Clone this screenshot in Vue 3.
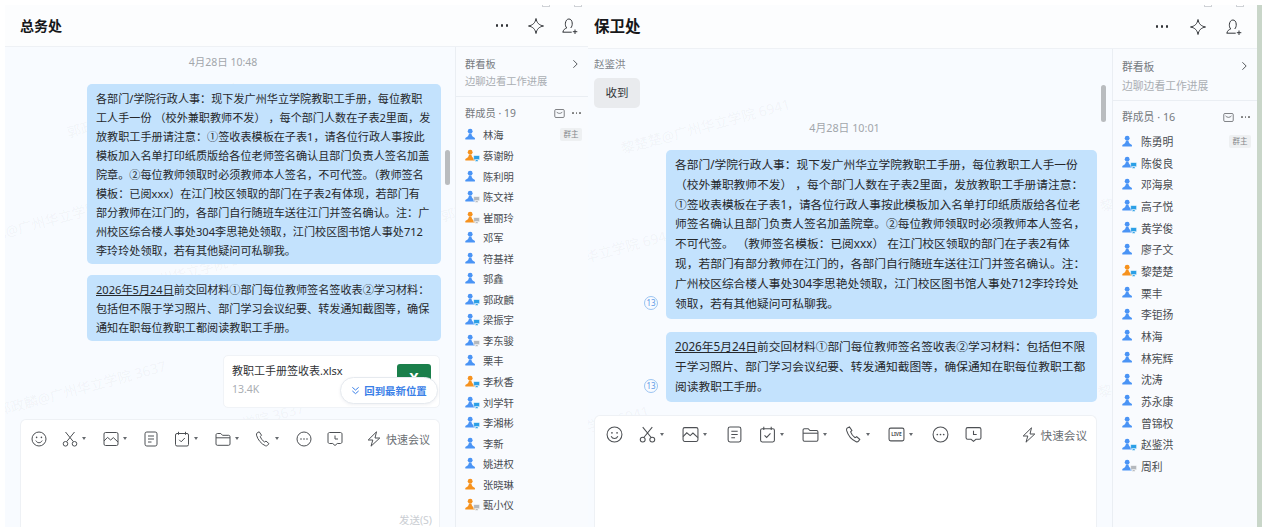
<script setup>
const mk = (s) => s.split(' ').map((t) => {
  const [n, c, d] = t.split(':')
  return { n, c: c === 'o' ? '#f6921e' : '#4a94f5', d: d || '' }
})

const panels = [
  {
    cls: 'p1', title: '总务处', count: 19, date: '4月28日 10:48', sender: null, file: true, send: true,
    marks: [[-8, 400], [62, 122], [-40, 232], [88, 287], [130, 442], [436, 206]].map(([x, y]) => ({ x, y: y - 47 })),
    winMarks: [542, 574],
    bubbles: [
      { read: false, lines: ['各部门/学院行政人事：现下发广州华立学院教职工手册，每位教职', '工人手一份 （校外兼职教师不发） ，每个部门人数在子表2里面，发', '放教职工手册请注意：①签收表模板在子表1，请各位行政人事按此', '模板加入名单打印纸质版给各位老师签名确认且部门负责人签名加盖', '院章。②每位教师领取时必须教师本人签名，不可代签。（教师签名', '模板：已阅xxx）在江门校区领取的部门在子表2有体现，若部门有', '部分教师在江门的，各部门自行随班车送往江门并签名确认。注：广', '州校区综合楼人事处304李思艳处领取，江门校区图书馆人事处712', '李玲玲处领取，若有其他疑问可私聊我。'] },
      { read: false, u: '2026年5月24日', lines: ['前交回材料①部门每位教师签名签收表②学习材料：', '包括但不限于学习照片、部门学习会议纪要、转发通知截图等，确保', '通知在职每位教职工都阅读教职工手册。'] },
    ],
    members: mk('林海 蔡谢盼:o:pc 陈利明 陈文祥:b:g 崔丽玲:o:g 邓军 符基祥 郭鑫 郭政麟:b:pc 梁振宇:b:pc 李东骏:b:g 栗丰 李秋香:o:pc 刘学轩:b:pc 李湘彬:b:pc 李新 姚进权 张晓琳:o 甄小仪:o:g'),
    tools: [['smile', 0], ['cut', 1], ['image', 1], ['doc', 0], ['todo', 1], ['folder', 1], ['phone', 1], ['more', 0], ['clock', 0]],
  },
  {
    cls: 'p2', title: '保卫处', count: 16, date: '4月28日 10:01', sender: { name: '赵鉴洪', text: '收到' }, file: false, send: false,
    marks: [[621, 138], [505, 268], [440, 52], [1100, 196], [480, 445], [1098, 382]].map(([x, y]) => ({ x: x - 588, y: y - 49 })),
    winMarks: [542 + 662, 574 + 662],
    bubbles: [
      { read: true, lines: ['各部门/学院行政人事：现下发广州华立学院教职工手册，每位教职工人手一份', '（校外兼职教师不发） ，每个部门人数在子表2里面，发放教职工手册请注意：', '①签收表模板在子表1，请各位行政人事按此模板加入名单打印纸质版给各位老', '师签名确认且部门负责人签名加盖院章。②每位教师领取时必须教师本人签名，', '不可代签。 （教师签名模板：已阅xxx） 在江门校区领取的部门在子表2有体', '现，若部门有部分教师在江门的，各部门自行随班车送往江门并签名确认。注：', '广州校区综合楼人事处304李思艳处领取，江门校区图书馆人事处712李玲玲处', '领取，若有其他疑问可私聊我。'] },
      { read: true, u: '2026年5月24日', lines: ['前交回材料①部门每位教师签名签收表②学习材料：包括但不限', '于学习照片、部门学习会议纪要、转发通知截图等，确保通知在职每位教职工都', '阅读教职工手册。'] },
    ],
    members: mk('陈勇明 陈俊良:b:pc 邓海泉 高子悦:b:pc 黄学俊:b:pc 廖子文 黎楚楚:o:pc 栗丰 李钜扬 林海 林宪辉 沈涛 苏永康 曾锦权 赵鉴洪:b:pc 周利:b:g'),
    tools: [['smile', 0], ['cut', 1], ['image', 1], ['doc', 0], ['todo', 1], ['folder', 1], ['phone', 1], ['live', 1], ['more', 0], ['clock', 0]],
  },
]

const markText = (p) => (p.cls === 'p1' ? '郭政麟@广州华立学院 3637' : '黎楚楚@广州华立学院 6941')
</script>

<template>
  <div class="page">
    <svg class="defs" width="0" height="0" aria-hidden="true">
      <symbol id="i-smile" viewBox="0 0 16 16"><circle cx="8" cy="8" r="7" /><circle class="fill" cx="5.6" cy="6.4" r=".8" /><circle class="fill" cx="10.4" cy="6.4" r=".8" /><path d="M4.8 9.6c.8 1.5 1.9 2.1 3.2 2.1s2.4-.6 3.2-2.1" /></symbol>
      <symbol id="i-cut" viewBox="0 0 16 16"><path d="M3.5 1l7.8 9.6M12.5 1L4.700 10.600" /><circle cx="3.500" cy="12.800" r="2.300" /><circle cx="12.500" cy="12.800" r="2.300" /></symbol>
      <symbol id="i-image" viewBox="0 0 16 16"><rect x="1" y="1.500" width="14" height="13" rx="1.500" /><path d="M1 10l3.500-3.600 3.200 2.600 2.600-2.400L15 11" /></symbol>
      <symbol id="i-doc" viewBox="0 0 16 16"><rect x="2" y="1" width="12" height="14" rx="1.800" /><path d="M5 5h6M5 8h6M5 11h3.500" /></symbol>
      <symbol id="i-todo" viewBox="0 0 16 16"><rect x="1.500" y="2.500" width="13" height="12.500" rx="1.500" /><path d="M4.500 .8v3M11.500 .8v3M5.200 8.800l2 2 3.600-3.800" /></symbol>
      <symbol id="i-folder" viewBox="0 0 16 16"><path d="M1 4c0-.8.500-1.500 1.300-1.500h3.500l1.700 1.800h6.200c.8 0 1.300.6 1.300 1.300v7.400c0 .8-.5 1.300-1.300 1.300H2.300C1.500 14.300 1 13.800 1 13z" /><path d="M1 6.800h14" /></symbol>
      <symbol id="i-phone" viewBox="0 0 16 16"><path d="M2.200 1.800l2-1 2.300 3.400-1.200 1.400c.6 1.800 2.300 4.200 4.200 5.400l1.500-.9 2.900 2.500-1.200 1.600c-.5.6-1.400.9-2.200.6C6.200 13 2.800 8.700 1.500 4.200c-.2-.9.100-1.900.7-2.400z" /></symbol>
      <symbol id="i-more" viewBox="0 0 16 16"><circle cx="8" cy="8" r="7" /><circle class="fill" cx="5" cy="8" r=".8" /><circle class="fill" cx="8" cy="8" r=".8" /><circle class="fill" cx="11" cy="8" r=".8" /></symbol>
      <symbol id="i-clock" viewBox="0 0 16 16"><path d="M2.500 1.500h11c.8 0 1.500.7 1.500 1.500v8c0 .8-.7 1.500-1.500 1.500h-3.200L8 14.500l-2.300-2H2.500C1.700 12.500 1 11.800 1 11V3c0-.8.700-1.500 1.500-1.500z" /><path d="M8 4.500v3.500h3" /></symbol>
      <symbol id="i-live" viewBox="0 0 16 16"><rect x="1" y="2" width="14" height="12" rx="1.500" /><text class="live" x="8" y="9.700" text-anchor="middle">LIVE</text></symbol>
      <symbol id="i-bolt" viewBox="0 0 16 16"><path d="M10.500 .8L2.200 9h4.600l-1.800 6.200L13.800 7H9l1.500-6.200z" /></symbol>
      <symbol id="i-star" viewBox="0 0 18 18"><path d="M9 1.500c.8 4.300 2.900 6.600 7.500 7.500-4.600.9-6.700 3.200-7.500 7.500-.8-4.300-2.900-6.600-7.500-7.500 4.600-.9 6.700-3.200 7.500-7.500z" /></symbol>
      <symbol id="i-add" viewBox="0 0 18 18"><path d="M1.500 15.200h9.200M2 15c.4-2.500 1.900-3.200 3.700-4-1.100-1.300-1.500-3-1.300-4.800.3-2.500 1.600-4.200 3.500-4.200s3.100 1.600 3.300 4c.2 1.900-.3 3.700-1.500 5" /><path d="M14 12.500v4.500M11.800 14.700h4.500" /></symbol>
      <symbol id="i-mail" viewBox="0 0 14 12"><rect x=".7" y=".7" width="12.600" height="10.600" rx="1.500" /><path d="M3 3.800c1 1.300 2.400 2 4 2s3-.7 4-2" /></symbol>
    </svg>

    <section v-for="p in panels" :key="p.cls" class="panel" :class="p.cls">
      <header class="head">
        <h1>{{ p.title }}</h1>
        <div class="head-icons">
          <span class="dots"><i /><i /><i /></span>
          <svg class="ico big"><use href="#i-star" /></svg>
          <svg class="ico big"><use href="#i-add" /></svg>
        </div>
      </header>
      <div class="body">
        <div class="chat">
          <div class="marks">
            <span v-for="(m, i) in p.marks" :key="i" class="mark" :style="{ left: m.x + 'px', top: m.y + 'px' }">{{ markText(p) }}</span>
          </div>
          <div class="msgs">
            <div v-if="p.sender" class="incoming">
              <div class="sender">{{ p.sender.name }}</div>
              <div class="gray">{{ p.sender.text }}</div>
            </div>
            <div class="date">{{ p.date }}</div>
            <div v-for="(b, i) in p.bubbles" :key="i" class="bubble">
              <div v-for="(l, j) in b.lines" :key="j" class="line"><u v-if="b.u && j === 0">{{ b.u }}</u>{{ l }}</div>
              <span v-if="b.read" class="read">13</span>
            </div>
            <div v-if="p.file" class="file">
              <div class="file-info">
                <div class="file-name">教职工手册签收表.xlsx</div>
                <div class="file-size">13.4K</div>
              </div>
              <div class="xls">X</div>
              <div class="pill">
                <svg class="chev" viewBox="0 0 10 10"><path d="M1.500 1.500L5 4.500l3.500-3M1.500 5.500L5 8.500l3.500-3" /></svg>
                回到最新位置
              </div>
            </div>
          </div>
          <span class="scroll" />
          <div class="editor">
            <div class="tools">
              <div v-for="t in p.tools" :key="t[0]" class="tool" :class="{ withcaret: t[1] }">
                <svg class="ico"><use :href="'#i-' + t[0]" /></svg>
                <span v-if="t[1]" class="caret" />
              </div>
              <div class="quick">
                <svg class="ico"><use href="#i-bolt" /></svg>
                <span>快速会议</span>
              </div>
            </div>
            <div v-if="p.send" class="send">发送(S)</div>
          </div>
        </div>
        <aside class="side">
          <div class="board">
            <div class="board-title">群看板
              <svg class="chevron" viewBox="0 0 8 12"><path d="M1.500 1.500L6 6l-4.500 4.500" /></svg>
            </div>
            <div class="board-sub">边聊边看工作进展</div>
          </div>
          <div class="mem-head">
            <span>群成员 · {{ p.count }}</span>
            <div class="mem-tools">
              <svg class="mail"><use href="#i-mail" /></svg>
              <span class="dots small"><i /><i /><i /></span>
            </div>
          </div>
          <div v-for="(m, i) in p.members" :key="m.n" class="row">
            <svg class="person" viewBox="0 0 16 14">
              <circle cx="5.500" cy="3.400" r="2.600" :fill="m.c" />
              <path d="M4.200 6h2.600c.3 2.600 1.500 3.600 3.500 4.500.5.300.6 2 .1 2H.5c-.5 0-.4-1.700.1-2C2.700 9.600 3.900 8.600 4.200 6z" :fill="m.c" />
              <g v-if="m.d" :fill="m.d === 'pc' ? '#2b9fe6' : '#b4b8bd'" stroke="#fff" stroke-width=".6">
                <rect x="9.200" y="7" width="6.500" height="4.600" rx=".6" />
                <rect x="11" y="11.400" width="3" height="2" rx=".3" />
              </g>
            </svg>
            <span class="name">{{ m.n }}</span>
            <span v-if="i === 0" class="owner">群主</span>
          </div>
        </aside>
      </div>
      <span v-for="x in p.winMarks" :key="x" class="win" :style="{ left: x - (p.cls === 'p1' ? 5 : 588) + 'px' }" />
    </section>
    <div class="edge" />
  </div>
</template>

<style>
html, body { margin: 0; background: #fff; }
</style>

<style scoped>
.page {
  --ink: #2b2d30;
  display: flex;
  width: 1268px;
  height: 527px;
  box-sizing: border-box;
  padding: 5px 6px 0 5px;
  overflow: hidden;
  background: #fff;
  font-family: "Noto Sans", "Noto Sans CJK SC", sans-serif;
  color: var(--ink);
}
.defs { position: absolute; }
.defs :deep(path), .defs :deep(rect), .defs :deep(circle) { fill: none; }
.defs :deep(circle.fill) { fill: #4d5054; stroke: none; }
.defs :deep(.live) { font-size: 4.600px; font-weight: 700; fill: #4d5054; stroke: none; }
.ico { fill: none; stroke: #4d5054; stroke-width: 1; overflow: visible; }

.panel { position: relative; display: flex; flex-direction: column; background: #f8fbff; min-width: 0; }
.p1 {
  width: 583px; --head: 42px; --fs: 11.12px; --lh: 19px; --bpad: 4px; --side: 133px; --tg: 15px; --ts: 16px; --cw: 25.500px;
  --row: 20.550px; --sfs: 10.300px; --gap: 16px; --hp: 9px; --tp: 15px; --tt: 15px; --memh: 27.700px; --bl: 17px; --bt: 8.500px; --bb: 6.500px; --rg: 3px; --ep: 10px;
}
.p2 {
  width: 669px; --head: 44px; --fs: 11.72px; --lh: 19.800px; --bpad: 5.600px; --side: 145px; --tg: 16.200px; --ts: 17px; --cw: 27px;
  --row: 21.670px; --sfs: 10.800px; --gap: 18px; --hp: 14px; --tp: 6px; --tt: 15.500px; --memh: 29.200px; --bl: 19px; --bt: 7.500px; --bb: 5.500px; --rg: 4px; --ep: 11px;
}
.win { position: absolute; top: 0; width: 8px; height: 2px; border: solid #cfd2d6; border-width: 0 1px 1px; box-sizing: border-box; background: #fff; }

.head {
  height: var(--head);
  flex: none;
  display: flex;
  align-items: center;
  justify-content: space-between;
  padding: 0 var(--hp) 0 var(--tp);
  border-bottom: 1px solid #eef1f5;
  box-sizing: border-box;
  background: #fcfdfe;
}
.head h1 { margin: 0; font-size: var(--tt); font-weight: 700; color: #17181a; line-height: 1; }
.p1 .head h1 { font-size: 14px; }
.head-icons { display: flex; align-items: center; gap: var(--gap); }
.big { width: 18px; height: 18px; stroke: #33363a; }
.dots { display: flex; width: 18px; justify-content: center; gap: 3px; }
.dots i { width: 2.300px; height: 2.300px; border-radius: 50%; background: #303236; }
.dots.small { width: 11px; gap: 2px; }
.dots.small i { width: 1.700px; height: 1.700px; background: #777; }

.body { flex: 1; display: flex; min-height: 0; }
.chat { position: relative; flex: 1; min-width: 0; display: flex; flex-direction: column; overflow: hidden; }
.marks { position: absolute; inset: 0; overflow: hidden; }
.mark {
  position: absolute;
  font-size: 14px;
  white-space: nowrap;
  color: rgba(60, 70, 90, .055);
  transform: rotate(-15deg);
  transform-origin: 0 50%;
}
.msgs { position: relative; flex: 1; min-height: 0; display: flex; flex-direction: column; align-items: flex-end; padding-right: 14px; }
.p1 .msgs { padding-top: 8px; }
.p2 .msgs { padding-right: 15px; padding-top: 8px; }
.date { font-size: 10.500px; line-height: 15px; color: #a2a6ab; align-self: center; margin-bottom: 14px; }
.p2 .date { font-size: 10.800px; margin: 12px 0 15px 4px; }
.incoming { align-self: flex-start; margin-left: 6px; }
.sender { font-size: 10.500px; line-height: 14px; color: #80848a; margin-bottom: 7px; }
.gray { width: 46px; height: 30px; line-height: 30px; text-align: center; border-radius: 5px; background: #e9ebee; font-size: 11.500px; color: #33363a; }

.bubble {
  position: relative;
  padding: 5px 9px var(--bpad);
  margin-bottom: 11px;
  background: #c3e2fd;
  border-radius: 5px;
  font-size: var(--fs);
  line-height: var(--lh);
  color: #26282b;
  white-space: nowrap;
}
.p1 .bubble { width: 354px; box-sizing: border-box; }
.p2 .bubble { width: 431px; box-sizing: border-box; margin-bottom: 13px; }
.read {
  position: absolute;
  left: -22px;
  bottom: 9px;
  width: 14px;
  height: 14px;
  box-sizing: border-box;
  border: 1px solid #9cc4f2;
  border-radius: 50%;
  font-size: 8px;
  line-height: 12px;
  text-align: center;
  color: #5d9ae6;
  background: #f8fbff;
}

.file {
  position: relative;
  display: flex;
  width: 217px;
  height: 53px;
  margin: 3px 1px 0 0;
  box-sizing: border-box;
  padding: 8px;
  background: #fff;
  border: 1px solid #f0f3f7;
  border-radius: 5px;
}
.file-name { font-size: 11px; line-height: 14px; color: #303236; white-space: nowrap; }
.file-size { font-size: 10.500px; line-height: 14px; margin-top: 4px; color: #a9adb2; }
.xls {
  margin-left: auto;
  width: 34px;
  height: 34px;
  border-radius: 3px;
  background: #1a7f4b;
  color: #fff;
  font-weight: 700;
  font-size: 14px;
  line-height: 28px;
  text-align: center;
}
.pill {
  position: absolute;
  right: 1px;
  top: 21px;
  width: 98px;
  height: 27px;
  box-sizing: border-box;
  display: flex;
  align-items: center;
  justify-content: center;
  gap: 4px;
  background: #fff;
  border: 1px solid #e6eaef;
  border-radius: 14px;
  box-shadow: 0 1px 3px rgba(60, 80, 110, .08);
  color: #3a80e8;
  font-size: 10.400px;
  font-weight: 700;
  white-space: nowrap;
}
.chev { width: 9px; height: 9px; fill: none; stroke: #3a80e8; stroke-width: 1.100; flex: none; }

.scroll { position: absolute; width: 5px; border-radius: 3px; background: #b9bcbf; }
.p1 .scroll { left: 440px; top: 103px; height: 35px; }
.p2 .scroll { left: 513px; top: 36px; height: 37px; }

.editor {
  position: relative;
  flex: none;
  box-sizing: border-box;
  background: #fff;
  border: 1px solid #eef1f5;
  border-bottom: none;
  border-radius: 6px 6px 0 0;
  display: flex;
  flex-direction: column;
}
.p1 .editor { height: 108px; margin: 0 15px; }
.p2 .editor { height: 112px; margin: 0 15px 0 6px; }
.tools { display: flex; align-items: center; gap: var(--tg); height: 37px; padding: 0 9px 0 var(--ep); }
.tool { display: flex; align-items: center; gap: 4px; flex: none; width: var(--ts); height: var(--ts); }
.tool.withcaret { width: var(--cw); }
.tool .ico { width: var(--ts); height: var(--ts); flex: none; }
.caret { width: 0; height: 0; border: 2.500px solid transparent; border-top: 3px solid #666a6e; border-bottom: none; }
.quick { margin-left: auto; display: flex; align-items: center; gap: 4px; font-size: 11px; color: #6b6f74; white-space: nowrap; }
.quick .ico { width: 16px; height: 16px; }
.p2 .quick { font-size: 11.600px; }
.send { margin-top: auto; align-self: flex-end; padding-right: 7px; font-size: 10.500px; line-height: 14px; color: #c9cdd2; }

.side { flex: none; width: var(--side); box-sizing: border-box; border-left: 1px solid #eaeef3; background: #f9fbfe; font-size: var(--sfs); color: #65686d; }
.board { padding: var(--bt) 9px var(--bb); border-bottom: 1px solid #eaeef3; line-height: var(--bl); }
.board-title { display: flex; justify-content: space-between; align-items: center; color: #767a80; }
.board-sub { color: #aaaeb3; white-space: nowrap; }
.chevron { width: 7px; height: 10px; fill: none; stroke: #55585c; stroke-width: 1.200; }
.mem-head { height: var(--memh); box-sizing: border-box; padding: 8px 6px 0 9px; display: flex; justify-content: space-between; line-height: 16px; color: #767a80; }
.mem-tools { display: flex; align-items: center; gap: 6px; height: 16px; }
.mail { width: 11px; height: 9px; fill: none; stroke: #55585c; stroke-width: 1; }
.row { height: var(--row); display: flex; align-items: center; gap: var(--rg); padding: 0 6px 0 9px; color: #4a4d52; }
.person { width: 15px; height: 13px; flex: none; }
.name { white-space: nowrap; }
.owner { margin-left: auto; width: 22px; height: 13px; line-height: 13px; border-radius: 2px; text-align: center; background: #eef0f2; font-size: 7.500px; color: #85888c; }
.edge { width: 5px; flex: none; background: #c9d6c9; }
</style>
